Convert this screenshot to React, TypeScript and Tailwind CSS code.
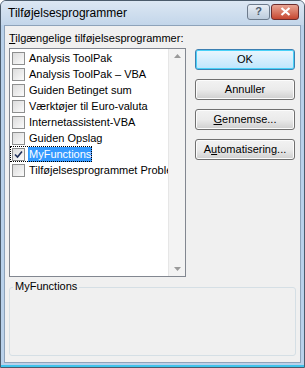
import React from "react"

const items = [
  "Analysis ToolPak",
  "Analysis ToolPak – VBA",
  "Guiden Betinget sum",
  "Værktøjer til Euro-valuta",
  "Internetassistent-VBA",
  "Guiden Opslag",
  "MyFunctions",
  "Tilføjelsesprogrammet Problemløser",
]

function CheckBox({ checked }: { checked: boolean }) {
  return (
    <span className="w-[13px] h-[13px] shrink-0 border border-[#8e8f8f] bg-gradient-to-br from-[#dcdcdc] to-[#fbfbfb] flex items-center justify-center">
      {checked && (
        <svg width="9" height="9" viewBox="0 0 9 9">
          <path d="M1 4.5 L3.5 7 L8 1.5" stroke="#22315a" strokeWidth="1.6" fill="none" />
        </svg>
      )}
    </span>
  )
}

function Button({ children, primary }: { children: React.ReactNode; primary?: boolean }) {
  return (
    <button
      className={
        primary
          ? "w-[100px] h-[21px] rounded-[3px] border border-[#3c7fb1] bg-gradient-to-b from-[#eaf6fd] to-[#bee6fd] shadow-[inset_0_0_0_1px_#48d1f8] text-[11px] text-black"
          : "w-[100px] h-[21px] rounded-[3px] border border-[#707070] bg-gradient-to-b from-[#f2f2f2] via-[#ebebeb] to-[#cfcfcf] shadow-[inset_0_0_0_1px_#fcfcfc] text-[11px] text-black"
      }
    >
      {children}
    </button>
  )
}

export default function App() {
  return (
    <div
      className="w-[305px] h-[368px] flex flex-col bg-[#b9d1ea] border border-[#4b5b6b] rounded-t-[6px] overflow-hidden"
      style={{ fontFamily: '"Liberation Sans", Arial, sans-serif' }}
    >
      <div className="h-[24px] shrink-0 flex items-center justify-between pl-[7px] pr-[5px] bg-gradient-to-b from-[#dce7f3] to-[#c3d6ea]">
        <span className="text-[12px] text-black">Tilføjelsesprogrammer</span>
        <div className="flex gap-[1px] -mt-[3px]">
          <span className="w-[23px] h-[16px] rounded-[3px] border border-[#6d7b8c] bg-gradient-to-b from-[#e8eef5] to-[#bccbdc] flex items-center justify-center text-[11px] font-bold text-[#4b5a6c]">?</span>
          <span className="w-[28px] h-[16px] rounded-[3px] border border-[#6d2d2d] bg-gradient-to-b from-[#e8a493] to-[#c5452f] flex items-center justify-center">
            <svg width="11" height="9" viewBox="0 0 11 9">
              <path d="M1.5 1 L9.5 8 M9.5 1 L1.5 8" stroke="#fff" strokeWidth="2.2" />
            </svg>
          </span>
        </div>
      </div>
      <div className="flex-1 mx-[3px] mb-[2px] border border-[#8ea3ba] bg-[#f0f0f0] flex flex-col px-[4px] pt-[6px]">
        <div className="text-[11px] leading-[13px] text-black">
          <span className="underline">T</span>ilgængelige tilføjelsesprogrammer:
        </div>
        <div className="flex mt-[3px]">
          <div className="w-[177px] h-[229px] border border-[#828790] bg-white flex">
            <div className="flex-1 min-w-0 overflow-hidden pt-[1px]">
              {items.map((it) => {
                const sel = it === "MyFunctions"
                return (
                  <div
                    key={it}
                    className={
                      "h-[16px] w-fit flex items-center gap-[3px] pl-[2px] whitespace-nowrap text-[11px] " +
                      (sel ? "outline outline-1 outline-dotted outline-black -outline-offset-1" : "")
                    }
                  >
                    <CheckBox checked={sel} />
                    <span className={sel ? "bg-[#3399ff] text-white px-[1px] h-[15px] leading-[15px]" : "text-black px-[1px]"}>
                      {it}
                    </span>
                  </div>
                )
              })}
            </div>
            <div className="w-[17px] shrink-0 bg-[#f3f3f3] border-l border-[#e6e6e6] flex flex-col justify-between items-center py-[5px]">
              <svg width="7" height="4" viewBox="0 0 7 4">
                <path d="M0 4 L3.5 0 L7 4 Z" fill="#9a9a9a" />
              </svg>
              <svg width="7" height="4" viewBox="0 0 7 4">
                <path d="M0 0 L3.5 4 L7 0 Z" fill="#9a9a9a" />
              </svg>
            </div>
          </div>
          <div className="ml-[9px] flex flex-col gap-[9px] pt-[1px]">
            <Button primary>OK</Button>
            <Button>Annuller</Button>
            <Button>
              <span className="underline">G</span>ennemse...
            </Button>
            <Button>
              A<span className="underline">u</span>tomatisering...
            </Button>
          </div>
        </div>
        <div className="relative mt-[10px] h-[69px] w-[287px] border border-[#d5dfe5] rounded-[3px]">
          <span className="absolute -top-[8px] left-[3px] px-[2px] bg-[#f0f0f0] text-[11px] leading-[13px] text-black">MyFunctions</span>
        </div>
      </div>
      <div className="h-[2px] shrink-0 bg-[#3fc4ec]" />
    </div>
  )
}
